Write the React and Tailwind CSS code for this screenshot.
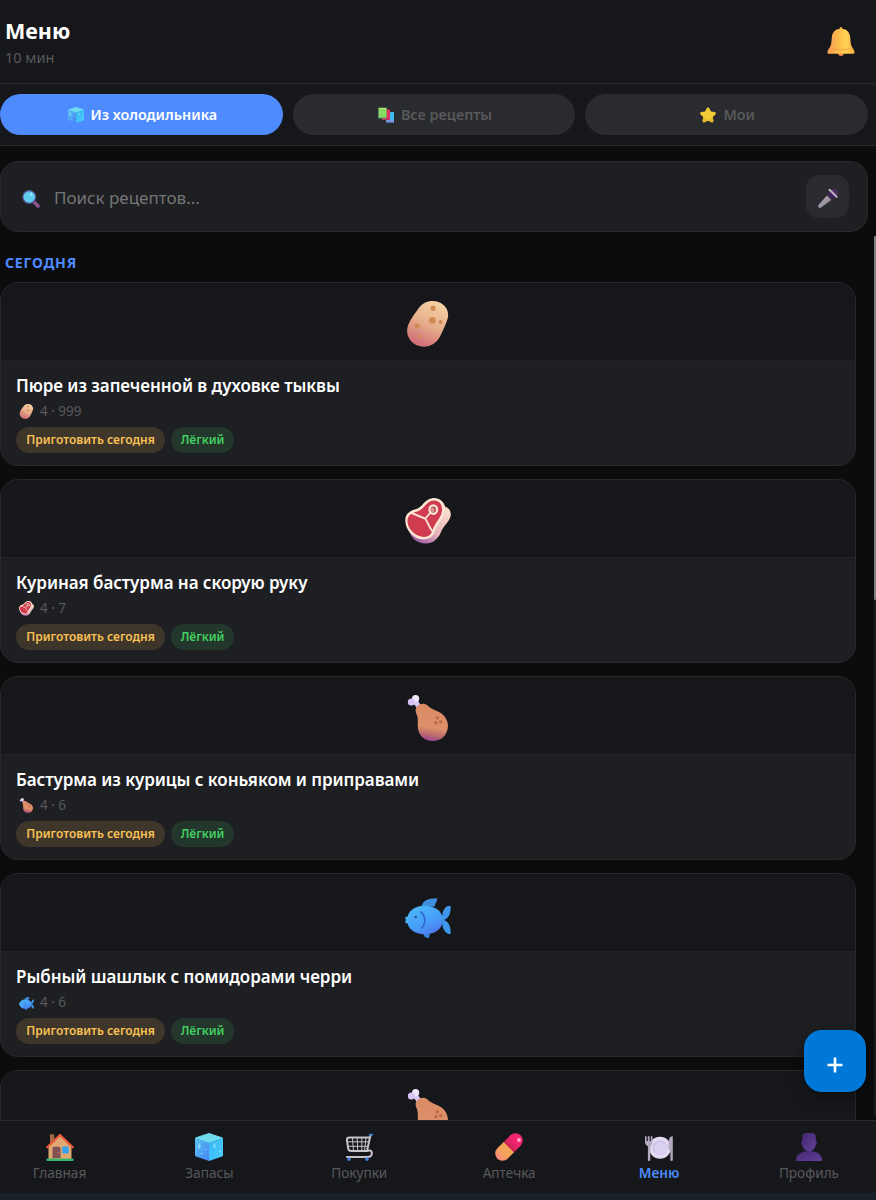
import React, { useState } from "react";

const Cube = ({ className }) => (
  <svg viewBox="0 0 28 28" className={className}>
    <defs>
      <linearGradient id="cubeLeft" x1="0" y1="0" x2="1" y2="1">
        <stop offset="0" stopColor="#5ac4f0" />
        <stop offset="1" stopColor="#4583f5" />
      </linearGradient>
      <linearGradient id="cubeRight" x1="0" y1="0" x2="1" y2="1">
        <stop offset="0" stopColor="#35b4ee" />
        <stop offset="1" stopColor="#4bcdff" />
      </linearGradient>
    </defs>
    <path d="M14 .5 27.3 4.9 14 9.8 .7 4.9Z" fill="#6fdcee" stroke="#6fdcee" strokeLinejoin="round" />
    <path d="M0 5 14 9.9V28L1 23.6Q0 23.2 0 22Z" fill="url(#cubeLeft)" />
    <path d="M28 5 14 9.9V28l13-4.4q1-.4 1-1.6Z" fill="url(#cubeRight)" />
    <path d="M4.3 9.5c-1.8 3.2-1.8 6.2 0 6.2s1.8-3 0-6.2ZM19.5 9.5c-1.7 2.8-1.7 5.2 0 5.2s1.7-2.4 0-5.2Z" fill="#8ee2fb" opacity=".8" />
    <circle cx="6.5" cy="20.5" r=".8" fill="#8bd0ff" />
    <circle cx="11" cy="16.5" r=".7" fill="#8bd0ff" />
    <circle cx="25" cy="18.5" r=".9" fill="#8fe2ff" />
  </svg>
);

const Books = ({ className }) => (
  <svg viewBox="0 0 16 16" className={className}>
    <path d="M8 5h8v10.5H8z" fill="#3fb7f0" />
    <path d="M8 13.5h8v2H8z" fill="#5b6fc6" />
    <path d="M8.5 13.6H16v.8H8.5z" fill="#c9b8e8" />
    <path d="M4 2.5h8V13H4z" fill="#e0315f" />
    <path d="M4 11.6h7v1.3H4z" fill="#b43c72" />
    <path d="M0 .5h8.5v11H0z" fill="#5f8a62" />
    <path d="M1 1h7.5v9.5H1z" fill="#86dc63" />
    <path d="M1 1h7.5v1H1z" fill="#b9e56a" />
  </svg>
);

const Star = ({ className }) => (
  <svg viewBox="0 0 16 16" className={className}>
    <path
      d="M6.7 1.2Q8-.9 9.3 1.2L11 4.6l3.7.5q2 .6.7 2.3l-2.6 2.6.6 3.8q.1 2.3-1.9 1.5L8 13.7l-3.5 1.6q-2 .8-1.9-1.5l.6-3.8L.6 7.4Q-.7 5.7 1.3 5.1L5 4.6Z"
      fill="#f1cb35"
    />
    <path d="M3.2 10 8 13.3l4.8-3.3.6 3.8q.1 2.3-1.9 1.5L8 13.7l-3.5 1.6q-2 .8-1.9-1.5Z" fill="#dba827" opacity=".5" />
  </svg>
);

const Bell = ({ className }) => (
  <svg viewBox="0 0 28 29" className={className}>
    <defs>
      <linearGradient id="bell" x1="0" y1="0" x2="1" y2="0">
        <stop offset="0" stopColor="#f79b57" />
        <stop offset=".45" stopColor="#fdc04c" />
        <stop offset=".7" stopColor="#ffd253" />
        <stop offset="1" stopColor="#fbaa42" />
      </linearGradient>
    </defs>
    <circle cx="14" cy="26" r="2.9" fill="#ef8a55" />
    <path d="M12.7 3V1.3a1.3 1.3 0 0 1 2.6 0V3Z" fill="#f9a948" />
    <path
      d="M14 1.8c5.3 0 8.8 3.4 9.2 8.7.3 5.2.8 8.4 2.4 10.6 1.1 1.5 2 2.8 2 4.3 0 1-.7 1.4-1.7 1.4H2.1c-1 0-1.7-.4-1.7-1.4 0-1.5.9-2.8 2-4.3C4 18.9 4.500 15.7 4.8 10.5 5.2 5.2 8.7 1.8 14 1.8Z"
      fill="url(#bell)"
    />
    <path d="M3.5 21.5c6 1.6 15 1.6 21 0" stroke="#f0953d" strokeWidth="1" fill="none" opacity=".7" />
  </svg>
);

const Magnifier = ({ className }) => (
  <svg viewBox="0 0 18 18" className={className}>
    <path d="m12 12 4 4" stroke="#8e528f" strokeWidth="3.6" strokeLinecap="round" />
    <circle cx="7.2" cy="7" r="6.4" fill="#60cdee" stroke="#53528c" strokeWidth="1.2" />
    <circle cx="9.3" cy="4.5" r="1.2" fill="#a9ecfb" />
  </svg>
);

const Microphone = ({ className }) => (
  <svg viewBox="0 0 20 20" className={className}>
    <defs>
      <linearGradient id="micBody" x1="0" y1="0" x2="1" y2="1">
        <stop offset="0" stopColor="#c9c2cd" />
        <stop offset="1" stopColor="#756c7d" />
      </linearGradient>
    </defs>
    <circle cx="15.8" cy="5" r="4.2" fill="#49305f" />
    <path d="m9 7.5 4.500 4.500L3 19.4q-1.500 1-2.400-.1t.1-2.5Z" fill="url(#micBody)" />
    <path d="m10.8 4.300 5.400 5.400" stroke="#432063" strokeWidth="4.4" />
    <path d="m11.500 1.700 7.200 7.200" stroke="#bdb3c6" strokeWidth="2" strokeLinecap="round" />
  </svg>
);

const Potato = ({ className }) => (
  <svg viewBox="0 0 46 46" className={className}>
    <defs>
      <linearGradient id="potato" x1=".7" y1="0" x2=".3" y2="1">
        <stop offset="0" stopColor="#f6d2a5" />
        <stop offset=".5" stopColor="#e7ae8b" />
        <stop offset="1" stopColor="#ce6a77" />
      </linearGradient>
    </defs>
    <path
      d="M27.5 0C37 0 45 7.5 42.8 17 41.5 22.5 38 29 35.5 34.5 31.5 43 24 46.5 16.5 45.5 7 44 .5 36 2.5 26.5 3.5 21 9.5 13 13.5 7.5 17.5 2 22 0 27.5 0Z"
      fill="url(#potato)"
    />
    <g fill="#d08a56">
      <circle cx="28" cy="7.3" r="2.6" />
      <circle cx="27.3" cy="19.3" r="3.4" />
      <circle cx="35.7" cy="21" r="1.9" />
      <circle cx="12" cy="25" r="2.6" />
      <circle cx="14.7" cy="35.3" r="1.8" />
    </g>
  </svg>
);

const Meat = ({ className }) => (
  <svg viewBox="0 0 46 46" className={className}>
    <defs>
      <linearGradient id="meatSide" x1=".8" y1=".2" x2=".3" y2="1">
        <stop offset="0" stopColor="#f9dccb" />
        <stop offset=".6" stopColor="#e9b3bd" />
        <stop offset="1" stopColor="#9b5aa5" />
      </linearGradient>
    </defs>
    <path
      d="M27 .5c8-1 12 4 13 8 5 2 6.5 6 5.5 10-1.5 6-7 9-9.5 15.500C33.5 41 27 46 20 45.5 12 45 7 41 5 35L1 20Z"
      fill="url(#meatSide)"
    />
    <path
      d="M.3 22C.5 15 6 12.5 11.5 11 18 9 19 .8 28 .2c8-.4 12 5.3 11.5 12.3C39 21 32 26 30 33c-2 6.5-8 9.5-15 8C6 39 0 30 .3 22Z"
      fill="#fae6d3"
    />
    <path
      d="M2.5 22.3C2.7 17 7 15 12.3 13.5 19.5 11.3 21 3.2 28.2 2.5 34 2 37.5 6.5 37 12.5c-.6 7.5-7.2 12-9.4 19.700-1.6 5.6-6 7.6-11.8 6.3C8 36.8 2.2 29.5 2.5 22.3Z"
      fill="#d13b50"
    />
    <path d="m5.5 14.5 14.500 6c3 3.5 4 9 8 13.5M20 21l5.5-6.5" stroke="#fae6d3" strokeWidth="1.9" fill="none" />
    <ellipse cx="28.3" cy="11.6" rx="3.8" ry="4.3" fill="#a85058" stroke="#fae6d3" strokeWidth="2.2" />
    <ellipse cx="27.7" cy="12" rx="1.7" ry="2.5" fill="#dc9a88" />
  </svg>
);

const Drumstick = ({ className }) => (
  <svg viewBox="0 0 46 46" className={className}>
    <defs>
      <linearGradient id="drumstick" x1=".6" y1="0" x2=".45" y2="1">
        <stop offset="0" stopColor="#d98b64" />
        <stop offset=".65" stopColor="#dc8f68" />
        <stop offset=".85" stopColor="#b9686f" />
        <stop offset="1" stopColor="#9a4496" />
      </linearGradient>
    </defs>
    <path d="m9 5 6 8" stroke="#d8c7f3" strokeWidth="5" />
    <circle cx="10.6" cy="3.7" r="3.6" fill="#efe6fa" />
    <circle cx="6.4" cy="7" r="3.6" fill="#d5c2f2" />
    <path
      d="M11.5 12c3-3.500 8-4.500 11-1.5 3 3 6.5 4 10.5 6C40 19.5 43 25.5 43 31.500 42 41 36 46 28 46 19 46 13 40 12.800 31.5 12.7 26 13.3 23 11.5 19c-1.2-2.800-1.2-5 0-7Z"
      fill="url(#drumstick)"
    />
    <g fill="#bb6843">
      <circle cx="32.3" cy="22.8" r="1.6" />
      <circle cx="31" cy="27.8" r="1.6" />
      <circle cx="35.7" cy="26.8" r="1.6" />
    </g>
  </svg>
);

const Fish = ({ className }) => (
  <svg viewBox="0 -4 46 46" className={className}>
    <defs>
      <linearGradient id="fish" x1=".2" y1="0" x2=".8" y2="1">
        <stop offset="0" stopColor="#4cb9f9" />
        <stop offset=".6" stopColor="#479df8" />
        <stop offset="1" stopColor="#5274ee" />
      </linearGradient>
    </defs>
    <path d="M16.5 10.5C18 5 22 2.3 31.5 2.3q1.2 0 .7 1.2L29.5 10.5Z" fill="#3f8fdf" />
    <path d="M37 23C37 15 40 10 44.5 9.7q1.3 0 1.2 1.5c0 6-1.7 11-7 12.8 5.3 1.8 7 6.5 7 12.5q.1 1.6-1.2 1.5C40 37.7 37 32 37 25Z" fill="#3e97ea" />
    <path d="M18 37c.5 3 2.5 5.3 6 5l1-5Z" fill="#3a86dc" />
    <path d="M0 22q0-1.5 3-1.3v6.6Q0 27.5 0 26l1-2Z" fill="#4aaef5" />
    <path d="M19.7 9.7C30 9.7 37.7 15 37.7 24S30 38.3 19.7 38.3 2 32.5 2 24 9.5 9.7 19.7 9.7Z" fill="url(#fish)" />
    <circle cx="10.7" cy="21" r="1.2" fill="#26508a" />
    <path d="M16 16c4.5 4 5.5 11 .8 16" stroke="#3268d2" strokeWidth="1.7" strokeLinecap="round" fill="none" />
  </svg>
);

const House = ({ className }) => (
  <svg viewBox="0 0 28 28" className={className}>
    <path d="M4 1.3h4.2V12H4z" fill="#a9674a" />
    <path d="M14 2.5 25.5 14v12H2.5V14Z" fill="#dfa871" />
    <path d="M1.3 14.3 14 2l12.7 12.3" stroke="#ee5a3b" strokeWidth="2.2" strokeLinecap="round" strokeLinejoin="round" fill="none" />
    <path d="M6.5 15.3q0-1.5 1.5-1.5h5q1.5 0 1.5 1.5V25h-8Z" fill="#815254" />
    <circle cx="12.2" cy="19.5" r=".6" fill="#d59a73" />
    <rect x="16.2" y="13.5" width="6.5" height="7" rx="1" fill="#35a4ed" />
    <path d="M.5 25.4h27V27q0 1-1 1h-25q-1 0-1-1Z" fill="#39b56b" />
  </svg>
);

const Cart = ({ className }) => (
  <svg viewBox="0 0 28 28" className={className}>
    <g fill="none" stroke="#c8c2cd" strokeLinecap="round" strokeLinejoin="round">
      <path d="M25.5 2 22 18H6.5q-2.8 0-3.3-2.5L2 7.5Q1.5 4.5 4.5 4.5H24.5" strokeWidth="2" />
      <path d="M3 8.8h20M3.5 13.3h18.7M7.5 5l1 13M12.2 5l.5 13M16.8 5v13M21 5l-1.5 13" strokeWidth="1" />
      <path d="M22 18q4.8-1.5 4.9 2 0 4-4.4 4H2" strokeWidth="2" />
    </g>
    <path d="M24.8 1.7h2.2" stroke="#3c82d8" strokeWidth="2" strokeLinecap="round" />
    <circle cx="4" cy="26.3" r="1.7" fill="#3c7fdc" />
    <circle cx="22" cy="26.3" r="1.7" fill="#3c7fdc" />
  </svg>
);

const Pill = ({ className }) => (
  <svg viewBox="0 0 28 28" className={className}>
    <defs>
      <linearGradient id="pill" gradientUnits="userSpaceOnUse" x1="4" y1="24" x2="24" y2="4">
        <stop offset="0" stopColor="#fb8d76" />
        <stop offset=".25" stopColor="#f7a45c" />
        <stop offset=".48" stopColor="#f3a655" />
        <stop offset=".48" stopColor="#cc2457" />
        <stop offset=".8" stopColor="#f3256f" />
      </linearGradient>
    </defs>
    <path d="M7.5 20.5 20.5 7.5" stroke="url(#pill)" strokeWidth="14.5" strokeLinecap="round" />
    <circle cx="24" cy="7" r="1.9" fill="#ffa9c5" />
  </svg>
);

const Plate = ({ className }) => (
  <svg viewBox="0 0 28 28" className={className}>
    <circle cx="15" cy="14.8" r="11" fill="#e3dbf4" />
    <circle cx="15" cy="14.8" r="7.5" fill="#cfc1e8" />
    <circle cx="15.6" cy="15.5" r="6.3" fill="#dcd0f1" />
    <path d="M0 3.3h1.6V8h1.2V3.3h1.8V8h1.2V3.3h1.7V9q0 3.5-2.2 4.3V27q0 1-1.2 1t-1.2-1V13.3Q0 12 0 9Z" fill="#b3a8bd" />
    <path d="M27.8 3.3V27q0 1-1.2 1t-1.2-1V16.5h-1.8V9q.2-5.7 4.2-5.7Z" fill="#b3a8bd" />
  </svg>
);

const Person = ({ className }) => (
  <svg viewBox="0 0 28 28" className={className}>
    <defs>
      <linearGradient id="person" x1="0" y1="0" x2="1" y2="1">
        <stop offset="0" stopColor="#44286f" />
        <stop offset="1" stopColor="#60409a" />
      </linearGradient>
    </defs>
    <path d="M.8 28C.8 21.5 6 18 14 18s13.2 3.5 13.2 10Z" fill="url(#person)" />
    <rect x="6" y="7.5" width="16" height="4.5" rx="2" fill="#4a2c79" />
    <path d="M7.3 4q0-4 4-4h5.4q4 0 4 4v7c0 4.5-3 7.3-6.7 7.3S7.3 15.5 7.3 11Z" fill="url(#person)" />
  </svg>
);

const tabs = [
  { id: "fridge", label: "Из холодильника", Icon: Cube },
  { id: "all", label: "Все рецепты", Icon: Books },
  { id: "mine", label: "Мои", Icon: Star },
];

const recipes = [
  { id: 1, title: "Пюре из запеченной в духовке тыквы", meta: "4 · 999", Icon: Potato },
  { id: 2, title: "Куриная бастурма на скорую руку", meta: "4 · 7", Icon: Meat },
  { id: 3, title: "Бастурма из курицы с коньяком и приправами", meta: "4 · 6", Icon: Drumstick },
  { id: 4, title: "Рыбный шашлык с помидорами черри", meta: "4 · 6", Icon: Fish },
  { id: 5, Icon: Drumstick },
];

const navItems = [
  { id: "home", label: "Главная", Icon: House },
  { id: "stock", label: "Запасы", Icon: Cube },
  { id: "shopping", label: "Покупки", Icon: Cart },
  { id: "pharmacy", label: "Аптечка", Icon: Pill },
  { id: "menu", label: "Меню", Icon: Plate },
  { id: "profile", label: "Профиль", Icon: Person },
];

const RecipeCard = ({ title, meta, Icon }) => (
  <article className="h-[184px] shrink-0 overflow-hidden rounded-[18px] border border-[#28292c] bg-[#1e1f23]">
    <div className="flex h-[78px] items-center justify-center border-b border-[#222327] bg-[#16171a] pt-1">
      <Icon className="size-[46px]" />
    </div>
    {title && (
      <div className="px-[15px] pt-[13px]">
        <h3 className="text-[17px] leading-6 font-semibold tracking-[-0.06px] whitespace-nowrap text-white">
          {title}
        </h3>
        <div className="mt-0.5 flex h-[22px] items-center pl-[3px] text-[13.5px] text-[#58595b]">
          <Icon className="mr-1.5 size-[15px]" />
          {meta}
        </div>
        <div className="mt-[5px] flex gap-1.5 text-[12px] leading-[26px] font-semibold whitespace-nowrap">
          <span className="w-[149px] rounded-full bg-[#3f362b] text-center text-[#f7c155]">
            Приготовить сегодня
          </span>
          <span className="w-[63px] rounded-full bg-[#24372c] text-center text-[#43cf61]">Лёгкий</span>
        </div>
      </div>
    )}
  </article>
);

const App = () => {
  const [activeTab, setActiveTab] = useState("fridge");
  const [activeNav, setActiveNav] = useState("menu");
  const [query, setQuery] = useState("");

  return (
    <div className="relative flex h-[1200px] w-[876px] flex-col overflow-hidden bg-[#0c0c0d] font-['Noto_Sans',sans-serif]">
      {/* Header */}
      <header className="flex h-[84px] shrink-0 items-center justify-between border-b border-[#28292c] bg-[#16171a] pr-[21px] pl-[5px]">
        <div className="pt-[3px]">
          <h1 className="text-[21.5px] leading-7 font-bold text-white">Меню</h1>
          <p className="text-[14.5px] leading-6 text-[#58595b]">10 мин</p>
        </div>
        <Bell className="h-[29px] w-7" />
      </header>

      {/* Tabs */}
      <div className="flex h-[62px] shrink-0 gap-2.5 border-b border-[#28292c] bg-[#16171a] pt-2.5 pr-2">
        {tabs.map(({ id, label, Icon }) => (
          <button
            key={id}
            onClick={() => setActiveTab(id)}
            className={`flex h-[41px] flex-1 items-center justify-center gap-[7px] rounded-full pl-0.5 text-[14.4px] font-semibold ${
              activeTab === id ? "bg-[#4d8bff] text-white" : "bg-[#2a2b2e] text-[#58595b]"
            }`}
          >
            <Icon className="size-4" />
            {label}
          </button>
        ))}
      </div>

      {/* Search */}
      <div className="mt-[15px] mr-2 flex h-[71px] shrink-0 items-center rounded-[18px] border border-[#28292c] bg-[#1e1f23] pr-[18px] pl-[21px]">
        <Magnifier className="mt-1 size-[18px]" />
        <input
          value={query}
          onChange={(e) => setQuery(e.target.value)}
          placeholder="Поиск рецептов..."
          className="mt-[3px] ml-3.5 flex-1 bg-transparent text-[17px] text-white outline-none placeholder:text-[#757575]"
        />
        <button className="flex size-[43px] items-center justify-center rounded-[13px] bg-[#2a2b2e] pt-0.5">
          <Microphone className="size-5" />
        </button>
      </div>

      {/* Recipes */}
      <main className="flex min-h-0 flex-1 flex-col overflow-hidden pt-[19px] pr-5">
        <h2 className="mb-[7px] shrink-0 pl-[5px] text-[14px] leading-6 font-bold tracking-[0.8px] text-[#4d8bff]">
          СЕГОДНЯ
        </h2>
        <div className="flex flex-col gap-[13px]">
          {recipes.map(({ id, ...recipe }) => (
            <RecipeCard key={id} {...recipe} />
          ))}
        </div>
      </main>

      {/* Bottom navigation */}
      <nav className="flex h-[73px] shrink-0 justify-between border-t border-[#28292c] bg-[#16171a] pr-[17px] pl-[9.5px]">
        {navItems.map(({ id, label, Icon }) => (
          <button
            key={id}
            onClick={() => setActiveNav(id)}
            className={`flex w-[100px] flex-col items-center pt-3 text-[13.6px] leading-5 ${
              activeNav === id ? "font-semibold text-[#4d8bff]" : "text-[#58595b]"
            }`}
          >
            <Icon className="mb-0.5 size-7" />
            {label}
          </button>
        ))}
      </nav>
      <div className="h-[7px] shrink-0 bg-[#17212a]" />

      {/* Scrollbar */}
      <div className="absolute top-[236px] right-0 h-[880px] w-0.5 rounded-full bg-[#1c1c1d]">
        <div className="h-[364px] rounded-full bg-[#808080]" />
      </div>

      {/* Add button */}
      <button className="absolute top-[1030px] right-[10px] flex size-[62px] items-center justify-center rounded-[18px] bg-[#0078d7] shadow-[0_4px_14px_rgba(0,0,0,0.4)]">
        <svg viewBox="0 0 16 16" className="mt-[7px] size-4" stroke="#fff" strokeWidth="2.6">
          <path d="M8 .5v15M.5 8h15" />
        </svg>
      </button>
    </div>
  );
};

export default App;
